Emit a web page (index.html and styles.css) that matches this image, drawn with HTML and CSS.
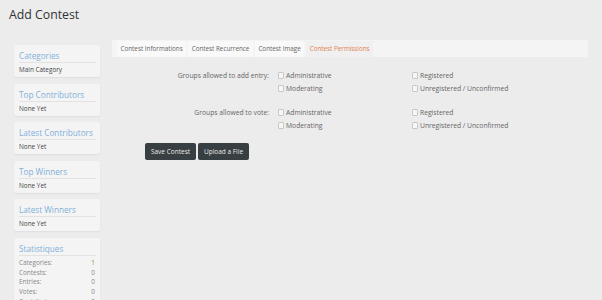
FILE: index.html
```html
<!DOCTYPE html>
<html lang="en">
<head>
    <meta charset="UTF-8">
    <title>Add Contest</title>
    <link rel="stylesheet" href="styles.css">
</head>
<body>
    <h1 class="page-title">Add Contest</h1>

    <div class="layout">
        <div class="sidebar">
            <div class="block">
                <h3>Categories</h3>
                <div class="block-body">Main Category</div>
            </div>
            <div class="block">
                <h3>Top Contributors</h3>
                <div class="block-body">None Yet</div>
            </div>
            <div class="block">
                <h3>Latest Contributors</h3>
                <div class="block-body">None Yet</div>
            </div>
            <div class="block">
                <h3>Top Winners</h3>
                <div class="block-body">None Yet</div>
            </div>
            <div class="block">
                <h3>Latest Winners</h3>
                <div class="block-body">None Yet</div>
            </div>
            <div class="block">
                <h3>Statistiques</h3>
                <div class="block-body stats">
                    <div class="stat"><span>Categories:</span><span class="val">1</span></div>
                    <div class="stat"><span>Contests:</span><span>0</span></div>
                    <div class="stat"><span>Entries:</span><span>0</span></div>
                    <div class="stat"><span>Votes:</span><span>0</span></div>
                    <div class="stat"><span>Contributors:</span><span>0</span></div>
                </div>
            </div>
        </div>

        <div class="main">
            <ul class="tabs">
                <li>Contest Informations</li>
                <li>Contest Recurrence</li>
                <li>Contest Image</li>
                <li class="active">Contest Permissions</li>
            </ul>

            <div class="form">
                <div class="form-row">
                    <label class="form-label">Groups allowed to add entry:</label>
                    <div class="choices">
                        <label class="check"><input type="checkbox"> Administrative</label>
                        <label class="check"><input type="checkbox"> Registered</label>
                        <label class="check"><input type="checkbox"> Moderating</label>
                        <label class="check"><input type="checkbox"> Unregistered / Unconfirmed</label>
                    </div>
                </div>
                <div class="form-row">
                    <label class="form-label">Groups allowed to vote:</label>
                    <div class="choices">
                        <label class="check"><input type="checkbox"> Administrative</label>
                        <label class="check"><input type="checkbox"> Registered</label>
                        <label class="check"><input type="checkbox"> Moderating</label>
                        <label class="check"><input type="checkbox"> Unregistered / Unconfirmed</label>
                    </div>
                </div>
            </div>

            <div class="buttons">
                <button>Save Contest</button>
                <button>Upload a File</button>
            </div>
        </div>
    </div>
</body>
</html>
```

FILE: styles.css
```css
body {
    margin: 0;
    background-color: #ececec;
    font-family: "Open Sans", Arial, sans-serif;
    color: #555;
    height: 300px;
    overflow: hidden;
}
.page-title {
    margin: 0;
    padding: 6px 0 0 9px;
    height: 24px;
    font-size: 12.3px;
    line-height: 17px;
    font-weight: normal;
    color: #333;
}
.layout {
    display: flex;
    padding: 0 14px 0 14px;
    margin-top: 10px;
}
.sidebar {
    width: 86px;
    flex-shrink: 0;
    padding-top: 5px;
}
.block {
    background-color: #f4f4f4;
    box-shadow: 0 1px 2px rgba(0,0,0,0.06);
    border-radius: 2px;
    padding: 4px 4px 3px 5px;
    margin-bottom: 6.6px;
}
.block h3 {
    margin: 0;
    font-size: 8.2px;
    line-height: 13px;
    font-weight: normal;
    white-space: nowrap;
    color: #7fb0d9;
    border-bottom: 1px solid #e2e2e2;
}
.block-body {
    font-size: 6.4px;
    line-height: 9px;
    padding-top: 2px;
    color: #444;
}
.stats {
    color: #888;
}
.stat {
    display: flex;
    justify-content: space-between;
    line-height: 9.7px;
    padding-right: 1px;
}
.stat span {
    color: #888;
}
.stat .val {
    color: #a08a3a;
}
.main {
    flex: 1;
    margin-left: 12px;
}
.tabs {
    list-style: none;
    margin: 0;
    padding: 1px 0 0 5px;
    height: 17px;
    box-sizing: border-box;
    display: flex;
    gap: 2px;
    background-color: #f4f4f4;
}
.tabs li {
    font-size: 6.3px;
    line-height: 16px;
    padding: 0 3.5px;
    white-space: nowrap;
    color: #666;
    background-color: #f9f9f9;
}
.tabs li.active {
    color: #e0824f;
    background-color: #f0f0f0;
}
.form {
    padding-top: 12px;
}
.form-row {
    display: flex;
    margin-bottom: 11px;
}
.form-label {
    width: 157px;
    text-align: right;
    font-size: 6.75px;
    line-height: 13px;
    padding-right: 8px;
    color: #666;
}
.choices {
    display: grid;
    grid-template-columns: 134px 133px;
}
.check {
    font-size: 6.75px;
    line-height: 13px;
    color: #666;
    display: flex;
    align-items: center;
}
.check input {
    width: 6px;
    height: 7px;
    margin: 0 2px 0 1px;
    appearance: none;
    border: 1px solid #c8c8c8;
    border-radius: 1px;
    background-color: #f6f6f6;
}
.buttons {
    padding-left: 33px;
    display: flex;
    gap: 2px;
}
button {
    background-color: #383f42;
    color: #e8e8e8;
    border: none;
    border-radius: 2px;
    font-family: "Open Sans", Arial, sans-serif;
    font-size: 6.5px;
    white-space: nowrap;
    height: 17px;
    width: 51px;
    padding: 0;
}
```
